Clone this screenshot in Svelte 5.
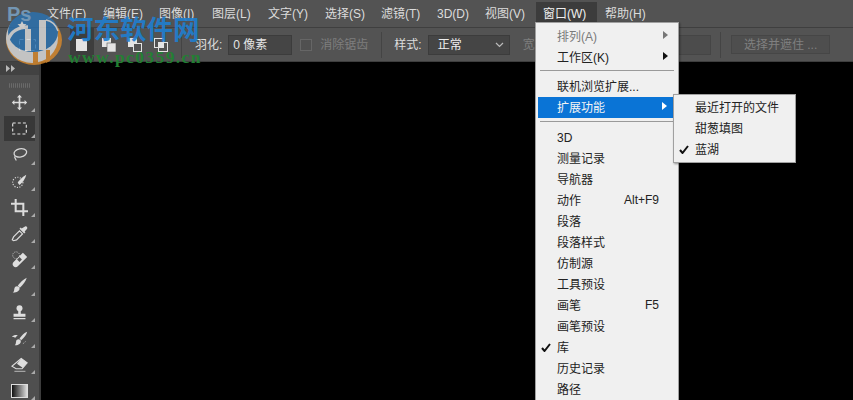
<script>
  const menus = [
    { label: '文件(F)', w: 40 }, { label: '编辑(E)', w: 40 }, { label: '图像(I)', w: 37 },
    { label: '图层(L)', w: 40 }, { label: '文字(Y)', w: 41 }, { label: '选择(S)', w: 40 },
    { label: '滤镜(T)', w: 40 }, { label: '3D(D)', w: 32 }, { label: '视图(V)', w: 41 }
  ];
  const panels = [
    { label: '3D' }, { label: '测量记录' }, { label: '导航器' }, { label: '动作', key: 'Alt+F9' },
    { label: '段落' }, { label: '段落样式' }, { label: '仿制源' }, { label: '工具预设' },
    { label: '画笔', key: 'F5' }, { label: '画笔预设' }, { label: '库', check: true },
    { label: '历史记录' }, { label: '路径' }
  ];
</script>

<div class="app">
  <header class="menubar">
    <span class="ps">Ps</span>
    <nav class="menus">
      {#each menus as m}
        <span class="menu" style="width:{m.w}px">{m.label}</span>
      {/each}
      <span class="menu open">窗口(W)</span>
      <span class="menu help">帮助(H)</span>
    </nav>
  </header>

  <div class="options">
    <svg class="tool-preset" width="20" height="14" viewBox="0 0 20 14"><rect x="1.5" y="1.5" width="16" height="11" fill="none" stroke="#ddd" stroke-dasharray="4 3"/></svg>
    <i class="sep first"></i>
    <div class="modes">
      <span class="mode active"><svg width="16" height="16" viewBox="0 0 16 16"><rect x="2" y="2" width="11" height="12" fill="#e4e4e4"/></svg></span>
      <span class="mode"><svg width="16" height="16" viewBox="0 0 16 16"><rect x="1" y="1" width="9" height="9" fill="#e4e4e4"/><rect x="6" y="6" width="9" height="9" fill="#e4e4e4" stroke="#535353" stroke-width=".6"/></svg></span>
      <span class="mode"><svg width="16" height="16" viewBox="0 0 16 16"><rect x="1" y="1" width="9" height="9" fill="#e4e4e4"/><rect x="6.5" y="6.5" width="8" height="8" fill="#535353" stroke="#e4e4e4"/></svg></span>
      <span class="mode"><svg width="16" height="16" viewBox="0 0 16 16"><rect x="1.5" y="1.5" width="9" height="9" fill="none" stroke="#e4e4e4"/><rect x="5.5" y="5.5" width="9" height="9" fill="none" stroke="#e4e4e4"/><rect x="5.5" y="5.5" width="5" height="5" fill="#e4e4e4"/></svg></span>
    </div>
    <i class="sep second"></i>
    <span class="lbl feather">羽化:</span>
    <span class="field px">0 像素</span>
    <span class="check"></span>
    <span class="lbl dim aa">消除锯齿</span>
    <i class="sep third"></i>
    <span class="lbl style">样式:</span>
    <span class="select">正常
      <svg width="9" height="6" viewBox="0 0 9 6"><path d="M1 1l3.5 3.5L8 1" fill="none" stroke="#bbb" stroke-width="1.2"/></svg>
    </span>
    <span class="lbl dim wide">宽度:</span>
    <span class="field blank"></span>
    <i class="sep fourth"></i>
    <span class="mask">选择并遮住 ...</span>
  </div>

  <div class="work">
    <aside class="toolbar">
      <div class="collapse"><svg width="9" height="7" viewBox="0 0 9 7"><path d="M0 0l4 3.500-4 3.500zM5 0l4 3.500-4 3.500z" fill="#b8b8b8"/></svg></div>
      <div class="grip"></div>
      <div class="tools">
        <span class="tool"><svg viewBox="0 0 20 20"><path d="M10 1l3 3h-2v5h5V7l3 3-3 3v-2h-5v5h2l-3 3-3-3h2v-5H4v2l-3-3 3-3v2h5V4H7z" fill="#dcdcdc"/></svg></span>
        <span class="tool active"><svg viewBox="0 0 20 20"><rect x="2" y="3.500" width="16" height="13" fill="none" stroke="#e6e6e6" stroke-width="1.300" stroke-dasharray="3.500 2.500"/></svg></span>
        <span class="tool"><svg viewBox="0 0 20 20"><ellipse cx="11" cy="8" rx="7.500" ry="4.800" fill="none" stroke="#d8d8d8" stroke-width="1.500" transform="rotate(-12 11 8)"/><path d="M5 12c-2 2 1 3 1 5" fill="none" stroke="#d8d8d8" stroke-width="1.500"/></svg></span>
        <span class="tool"><svg viewBox="0 0 20 20"><circle cx="8" cy="11" r="6" fill="none" stroke="#ddd" stroke-width="1.300" stroke-dasharray="1.300 1.700"/><path d="M18 2c-1 4-4 9-8 12-1-1-2-2-2-3 3-4 6-7 10-9z" fill="#dedede"/></svg></span>
        <span class="tool"><svg viewBox="0 0 20 20"><path d="M5.500 0v14.500H20M0 5.500h14.500V20" fill="none" stroke="#dcdcdc" stroke-width="2.400"/></svg></span>
        <span class="tool"><svg viewBox="0 0 20 20"><path d="M17 1.500a2 2 0 0 1 1.500 3.500L16 7.500l1 1-1.500 1.500-5.500-5.500L11.500 3l1 1z" fill="#dcdcdc"/><path d="M10 7l3.500 3.500-7 7L3 18.500l-1.500-1L3 14z" fill="none" stroke="#dcdcdc" stroke-width="1.400"/></svg></span>
        <span class="tool"><svg viewBox="0 0 20 20"><path d="M14 2l5 5-11 11c-1.500 1.500-3.500 1.500-5 0s-1.500-3.500 0-5z" fill="#dedede"/><rect x="8" y="8" width="4" height="4" fill="#535353" transform="rotate(45 10 10)"/><circle cx="6" cy="5" r="4" fill="none" stroke="#ddd" stroke-dasharray="1.200 1.500"/></svg></span>
        <span class="tool"><svg viewBox="0 0 20 20"><path d="M18.500 1c-1 4-4 8-8 11.500l-2.500-2.500C11 6.500 14.500 3 18.500 1zM7 11c2 0 3.500 1.500 3 3.500-1 3-5 4-8 4 2-1.500 1.500-3 2-5 .4-1.500 1.500-2.500 3-2.500z" fill="#dcdcdc"/></svg></span>
        <span class="tool"><svg viewBox="0 0 20 20"><circle cx="10" cy="5" r="3.500" fill="#dedede"/><path d="M8.500 8h3v3.500H17V15H3v-3.500h5.500zM3 16.500h14V18H3z" fill="#dedede"/></svg></span>
        <span class="tool"><svg viewBox="0 0 20 20"><path d="M19 2c-1 4-3.500 7-7 10l-2-2c3-4 5.500-6.500 9-8zM9 11c1.500 0 3 1.500 2.500 3-.5 2.500-4 4-7 4 1.500-1.500 1-3 1.500-4.500C6 12 7.500 11 9 11z" fill="#dcdcdc"/><path d="M1 8c2-2.500 5-2.500 7-2L5 9c-1.500-.5-2.500-1-4-1z" fill="#dcdcdc"/><path d="M14 16c1.500-.5 3-2 3.500-3.500" fill="none" stroke="#ccc" stroke-dasharray="1.200 1.500"/></svg></span>
        <span class="tool"><svg viewBox="0 0 20 20"><path d="M12 3l7 5-6 7H6L1 12z" fill="none" stroke="#dcdcdc" stroke-width="1.300"/><path d="M12 3l7 5-5 6-7-5z" fill="#dedede"/><path d="M4 18h13" stroke="#ccc"/></svg></span>
        <span class="tool"><span class="gradient"></span></span>
      </div>
    </aside>
    <main class="canvas"></main>
  </div>

  <div class="dropdown">
    <div class="item dis has-sub">排列(A)<b class="arrow gray"></b></div>
    <div class="item has-sub">工作区(K)<b class="arrow"></b></div>
    <hr class="a" />
    <div class="item">联机浏览扩展...</div>
    <div class="item hl has-sub">扩展功能<b class="arrow white"></b></div>
    <hr class="b" />
    {#each panels as p}
      <div class="item">
        {#if p.check}<svg class="tick" width="10" height="9" viewBox="0 0 10 9"><path d="M1 5l2.500 3L9 1" fill="none" stroke="#111" stroke-width="2"/></svg>{/if}
        {p.label}
        {#if p.key}<span class="key">{p.key}</span>{/if}
      </div>
    {/each}
  </div>

  <div class="submenu">
    <div class="item">最近打开的文件</div>
    <div class="item">甜葱填图</div>
    <div class="item"><svg class="tick" width="10" height="9" viewBox="0 0 10 9"><path d="M1 5l2.500 3L9 1" fill="none" stroke="#111" stroke-width="2"/></svg>蓝湖</div>
  </div>

  <div class="mark">
    <svg class="logo" width="70" height="70" viewBox="0 0 70 70">
      <ellipse cx="34" cy="40" rx="28" ry="25" fill="#d8892c"/>
      <ellipse cx="32" cy="38" rx="26" ry="25" fill="#dcdcdc"/>
      <ellipse cx="33" cy="32" rx="25" ry="20" fill="#2a72b2"/>
      <path d="M8 40c3-9 11-13 20-13" fill="none" stroke="#dcdcdc" stroke-width="3.500"/>
      <path d="M25 29h6v22h-6zM39 20h7v30h-7z" fill="#dcdcdc"/>
      <path d="M46 20c6 1 10 5 12 11" fill="none" stroke="#dcdcdc" stroke-width="1.500"/>
      <path d="M22 21l1.500 3 3 .3-2.300 2 .8 3-3-1.600-3 1.600.8-3-2.300-2 3-.3z" fill="#e6e6e6"/>
      <path d="M33 52h5v12h-5zM46 50h4v11l-4 2z" fill="#d8892c"/>
    </svg>
    <span class="mark-cn">河东软件网</span>
    <span class="mark-url">www.pc0359.cn</span>
  </div>
</div>

<style>
  :global(body) { margin: 0; background: #000; }
  .app {
    position: relative; width: 853px; height: 400px; overflow: hidden;
    font: 12px/1 "Liberation Sans", "Noto Sans CJK SC", sans-serif; color: #ddd; background: #000;
  }
  .menubar { height: 27px; background: #535353; display: flex; align-items: center; border-bottom: 1px solid #3f3f3f; }
  .ps { position: relative; z-index: 1; width: 47px; box-sizing: border-box; padding-left: 7px; font-size: 20px; font-weight: 700; color: #7396b4; }
  .menus { display: flex; align-items: center; gap: 16px; }
  .menu { white-space: nowrap; color: #dcdcdc; }
  .open { margin-left: -6px; width: 61px; box-sizing: border-box; padding: 6px 0 6px 7px; background: #3c3c3c; color: #eee; }
  .help { margin-left: -8px; }

  .options { height: 33px; background: #535353; display: flex; align-items: center; border-bottom: 1px solid #3e3e3e; }
  .tool-preset { margin-left: 18px; }
  .sep { width: 1px; height: 26px; background: #444; flex: none; }
  .sep.first { margin-left: 24px; visibility: hidden; }
  .modes { display: flex; margin-left: 7px; }
  .mode { width: 26px; height: 33px; display: flex; align-items: center; justify-content: center; }
  .mode.active { background: #3d3d3d; width: 24px; margin-right: 2px; }
  .sep.second { margin-left: 7px; }
  .lbl { white-space: nowrap; }
  .dim { color: #7e7e7e; }
  .feather { margin-left: 13px; }
  .field { box-sizing: border-box; height: 20px; background: #454545; border: 1px solid #3c3c3c; display: flex; align-items: center; }
  .px { width: 64px; margin-left: 6px; padding-left: 4px; color: #e4e4e4; }
  .check { width: 12px; height: 12px; border: 1px solid #666; margin-left: 8px; background: #505050; box-sizing: border-box; }
  .aa { margin-left: 8px; }
  .sep.third { margin-left: 13px; }
  .style { margin-left: 12px; }
  .select { box-sizing: border-box; width: 82px; height: 20px; margin-left: 6px; padding: 0 5px 0 9px; background: #454545; border: 1px solid #3c3c3c; display: flex; align-items: center; justify-content: space-between; color: #eee; }
  .wide { margin-left: 13px; }
  .blank { width: 149px; margin-left: 12px; background: #4c4c4c; border-color: #454545; }
  .sep.fourth { margin-left: 9px; }
  .mask { box-sizing: border-box; width: 99px; height: 19px; margin-left: 10px; border: 1px solid #464646; background: #4e4e4e; color: #808080; display: flex; align-items: center; justify-content: center; }

  .work { display: flex; height: 339px; }
  .toolbar { width: 39px; background: #4f4f4f; border-right: 2px solid #3c3c3c; flex: none; }
  .collapse { height: 13px; background: #424242; display: flex; align-items: center; padding-left: 6px; box-sizing: border-box; }
  .grip { height: 9px; margin: 0 9px 0; background: repeating-linear-gradient(90deg, #6a6a6a 0 1px, transparent 1px 2px); transform: translateY(6px) scaleY(.5); }
  .tools { display: flex; flex-direction: column; gap: 1px; margin-top: 6px; }
  .tool { position: relative; height: 25.200px; display: flex; align-items: center; justify-content: center; }
  .tool svg { width: 17px; height: 17px; }
  .tool::after { content: ""; position: absolute; right: 4px; bottom: 3px; border: 2px solid transparent; border-right-color: #aaa; border-bottom-color: #aaa; }
  .tool.active { background: #383838; margin: 0 4px 0 4px; }
  .tool.active::after { right: 0; }
  .gradient { width: 15px; height: 12px; border: 1px solid #ddd; background: linear-gradient(90deg, #111, #ddd); }
  .canvas { flex: 1; background: #000; }

  .dropdown, .submenu { position: absolute; box-sizing: border-box; background: #f0f0f0; color: #222; border: 1px solid #a0a0a0; box-shadow: 1px 1px 2px rgba(0,0,0,.4); }
  .dropdown { left: 535px; top: 22px; width: 144px; height: 400px; padding: 3px 0 0 2px; }
  .submenu { left: 673px; top: 94px; width: 123px; height: 69px; padding-top: 2px; }
  .item { position: relative; height: 21px; display: flex; align-items: center; padding-left: 19px; white-space: nowrap; margin-right: 4px; }
  .submenu .item { padding-left: 21px; margin-right: 0; height: 21px; }
  .item.dis { color: #7a7a7a; }
  .item.hl { background: #0a74d6; color: #f4f4f4; margin-right: 5px; }
  .arrow { position: absolute; right: 6px; top: 5px; border: 4px solid transparent; border-left: 5px solid #111; border-right: 0; }
  .arrow.gray { border-left-color: #777; }
  .arrow.white { border-left-color: #fff; }
  .tick { position: absolute; left: 3px; top: 6px; }
  .submenu .tick { left: 5px; }
  .key { position: absolute; right: 15px; top: 4px; }
  .dropdown hr { border: 0; border-top: 1px solid #9a9a9a; margin: 0 4px 0 2px; height: 0; }
  hr.a { margin-top: 2px !important; margin-bottom: 5px !important; }
  hr.b { margin-top: 3px !important; margin-bottom: 5px !important; }

  .mark { position: absolute; left: 0; top: 0; width: 210px; height: 75px; pointer-events: none; }
  .logo { position: absolute; left: 0; top: 0; opacity: .82; }
  .mark-cn { position: absolute; left: 67px; top: 15px; font: 700 26.500px/1 "Noto Sans CJK SC", sans-serif; color: #1f7fd0; white-space: nowrap; opacity: .9; }
  .mark-url { position: absolute; left: 68px; top: 49px; font: 700 17.500px/1 "Liberation Serif", serif; color: #237f34; white-space: nowrap; letter-spacing: 1.400px; }
</style>
